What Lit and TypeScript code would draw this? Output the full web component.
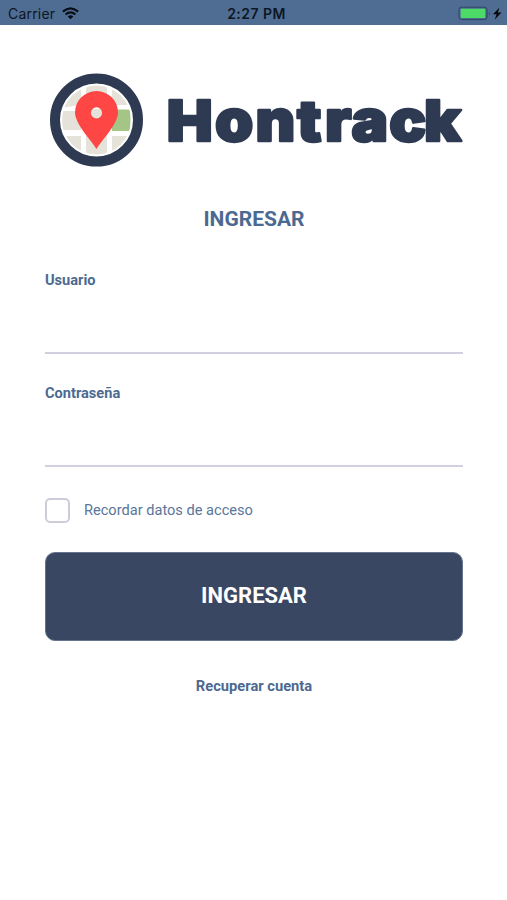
import { LitElement, html, css } from "lit";
import { customElement, property } from "lit/decorators.js";

@customElement("status-bar")
class StatusBar extends LitElement {
  static styles = css`
    :host { display: grid; grid-template-columns: 1fr auto 1fr; align-items: center; height: 25px; box-sizing: border-box; padding: 2px 4px 0 8px; background: #4f6d93; color: #0d1622; font-family: Inter, sans-serif; font-size: 14px; line-height: 22px; }
    .left { display: flex; align-items: center; gap: 7px; }
    .carrier { letter-spacing: 0.2px; }
    .time { padding-left: 2px; font-weight: 600; letter-spacing: 0.45px; }
    .right { display: flex; align-items: center; justify-content: flex-end; }
    svg { display: block; }
  `;
  render() {
    return html`
      <div class="left">
        <span class="carrier">Carrier</span>
        <svg width="17" height="13" viewBox="0 0 17 13">
          <g fill="none" stroke="#080e16" stroke-width="2.3">
            <path d="M0.9 4.7 Q8.5 -1.9 16.1 4.7" />
            <path d="M3.6 7.5 Q8.5 3.2 13.4 7.5" />
          </g>
          <path d="M5.7 9.4 Q8.5 7.2 11.3 9.4 L8.5 12.3Z" fill="#080e16" />
        </svg>
      </div>
      <span class="time">2:27 PM</span>
      <div class="right">
        <svg width="45" height="15" viewBox="0 0 45 15">
          <rect x="1" y="1.2" width="28" height="12.4" rx="2.5" fill="#4f6d93" stroke="#2e4562" />
          <rect x="2.7" y="2.8" width="24.6" height="9.2" rx="1" fill="#4bdb66" />
          <path d="M31 5.5q1.6 2 0 4z" fill="#2e4562" />
          <path d="M41.5 1.5L35 8.3h3.6L36.8 13.5L43.5 6.5h-3.7z" fill="#05080c" />
        </svg>
      </div>`;
  }
}

@customElement("brand-logo")
class BrandLogo extends LitElement {
  static styles = css`
    :host { display: block; }
    svg { display: block; }
    .word { font-family: Inter, sans-serif; font-weight: 900; font-size: 57px; fill: #2d3a52; stroke: #2d3a52; stroke-width: 2.4px; stroke-linejoin: round; }
  `;
  render() {
    return html`
      <svg width="420" height="96" viewBox="48 72 420 96">
        <defs><clipPath id="lens"><circle cx="96.5" cy="120" r="34.5" /></clipPath></defs>
        <circle cx="96.5" cy="120" r="41.5" fill="#fff" stroke="#2d3a52" stroke-width="10" />
        <g clip-path="url(#lens)" fill="#e5e3d9">
          <path d="M60 84H81V105L60 108ZM86 84H107V104H86ZM112 84H134V105H112ZM60 111H81V130H60ZM86 109H107V131H86ZM60 136H81V157H60ZM86 136H107V157H86ZM112 136H134V157H112Z" />
          <path d="M112 109.5H130.5V131H112Z" fill="#a5c586" />
        </g>
        <path fill-rule="evenodd" fill="#fe4644" d="M96.5 149C91 140 75 124 75 112.5A21.5 21.5 0 0 1 118 112.5C118 124 102 140 96.5 149ZM96.5 107.3a5.6 5.6 0 1 0 0 11.2a5.6 5.6 0 1 0 0-11.2Z" />
        <text class="word" transform="scale(1.074 1)" x="155.3 200.1 237.9 276.6 302.6 327.2 362.4 394.8" y="141.3">Hontrack</text>
      </svg>`;
  }
}

@customElement("line-field")
class LineField extends LitElement {
  @property() label = "";
  @property() type = "text";
  static styles = css`
    :host { display: block; }
    label { display: block; font-family: Roboto, sans-serif; font-weight: 700; font-size: 14.6px; line-height: 20px; color: #4c6a91; }
    input { display: block; box-sizing: border-box; width: 100%; height: 64px; padding: 0; border: 0; border-bottom: 2px solid #d2cfe0; border-radius: 0; background: none; outline: none; font: 16px Roboto, sans-serif; color: #37465f; }
  `;
  render() {
    return html`<label for="entry">${this.label}</label><input id="entry" type=${this.type} />`;
  }
}

@customElement("app-root")
class AppRoot extends LitElement {
  static styles = css`
    :host { display: block; height: 900px; background: #fff; overflow: hidden; font-family: Roboto, sans-serif; color: #4c6a91; }
    .brand { padding: 47px 0 0 48px; }
    .form { display: flex; flex-direction: column; padding: 37px 44px 0 45px; }
    .title { margin: 0 0 37px; text-align: center; font-size: 21px; line-height: 28px; font-weight: 700; }
    .user { margin-bottom: 29px; }
    .remember { display: flex; align-items: flex-start; gap: 14px; margin-top: 31px; height: 25px; font-size: 14.6px; line-height: 24px; color: #5a7699; }
    .box { box-sizing: border-box; width: 25px; height: 25px; border: 2px solid #cfccda; border-radius: 5px; }
    .submit { margin-top: 29px; height: 89px; padding: 0 0 2px; border: 1px solid #66758f; border-radius: 10px; background: #394763; color: #fff; font: 700 22px Roboto, sans-serif; }
    .recover { margin-top: 35px; text-align: center; font-size: 14.7px; line-height: 20px; font-weight: 700; }
  `;
  render() {
    return html`
      <status-bar></status-bar>
      <div class="brand"><brand-logo></brand-logo></div>
      <div class="form">
        <h1 class="title">INGRESAR</h1>
        <line-field class="user" label="Usuario"></line-field>
        <line-field label="Contraseña" type="password"></line-field>
        <div class="remember"><span class="box"></span><span>Recordar datos de acceso</span></div>
        <button class="submit">INGRESAR</button>
        <div class="recover">Recuperar cuenta</div>
      </div>`;
  }
}
